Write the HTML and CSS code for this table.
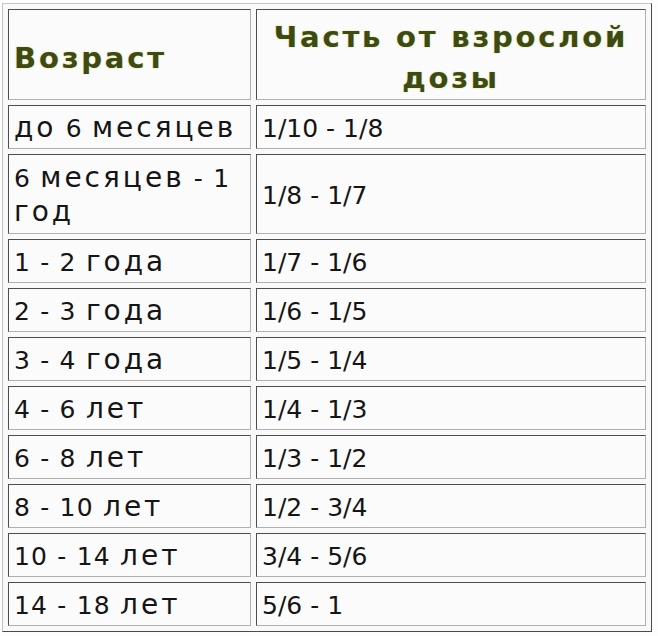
FILE: index.html
```html
<!DOCTYPE html>
<html lang="ru">
<head>
<meta charset="utf-8">
<link rel="stylesheet" href="styles.css">
</head>
<body>
<table class="dose">
  <tr class="head">
    <th class="age-h">Возраст</th>
    <th class="part-h">Часть от взрослой дозы</th>
  </tr>
  <tr><td class="c1"><span class="ru">до</span> 6 <span class="ru">месяцев</span></td><td class="c2">1/10 - 1/8</td></tr>
  <tr class="tall"><td class="c1">6 <span class="ru">месяцев</span> - 1 <span class="ru">год</span></td><td class="c2">1/8 - 1/7</td></tr>
  <tr><td class="c1">1 - 2 <span class="ru">года</span></td><td class="c2">1/7 - 1/6</td></tr>
  <tr><td class="c1">2 - 3 <span class="ru">года</span></td><td class="c2">1/6 - 1/5</td></tr>
  <tr><td class="c1">3 - 4 <span class="ru">года</span></td><td class="c2">1/5 - 1/4</td></tr>
  <tr><td class="c1">4 - 6 <span class="ru">лет</span></td><td class="c2">1/4 - 1/3</td></tr>
  <tr><td class="c1">6 - 8 <span class="ru">лет</span></td><td class="c2">1/3 - 1/2</td></tr>
  <tr><td class="c1">8 - 10 <span class="ru">лет</span></td><td class="c2">1/2 - 3/4</td></tr>
  <tr><td class="c1">10 - 14 <span class="ru">лет</span></td><td class="c2">3/4 - 5/6</td></tr>
  <tr><td class="c1">14 - 18 <span class="ru">лет</span></td><td class="c2">5/6 - 1</td></tr>
</table>
</body>
</html>
```

FILE: styles.css
```css
html, body {
  margin: 0;
  padding: 0;
  background: #fdfdfd;
}

.dose {
  margin: 3px 0 0 2px;
  width: 650px;
  border-collapse: separate;
  border-spacing: 5px;
  border-style: solid;
  border-width: 1px;
  border-color: #c4c4c4 #4a4a4a #4a4a4a #c4c4c4;
  background: #f9f9f9;
  font-family: "DejaVu Sans", Verdana, sans-serif;
  color: #151515;
}

.dose th,
.dose td {
  box-sizing: border-box;
  border-style: solid;
  border-width: 1px;
  border-color: #4d4d4d #b0b0b0 #b0b0b0 #4d4d4d;
  background: #fbfbfb;
  padding: 2px 5px 0;
  vertical-align: middle;
}

.dose td {
  height: 44px;
  font-size: 25px;
  line-height: 33px;
}

.dose .tall td {
  height: 80px;
}

.c1 {
  width: 243px;
  letter-spacing: 1.2px;
}

.ru {
  font-size: 28px;
  letter-spacing: 3px;
}

.c2 {
  padding-left: 6px;
}

.head th {
  height: 90px;
  padding-top: 7px;
  font-weight: bold;
  font-size: 29px;
  letter-spacing: 2.8px;
  line-height: 41px;
  color: #3e4a12;
  text-shadow: 0 0 3px #eef5c8, 0 0 1px #9aa860;
}

.age-h {
  text-align: left;
  padding-left: 7px;
}

.part-h {
  text-align: center;
}
```
